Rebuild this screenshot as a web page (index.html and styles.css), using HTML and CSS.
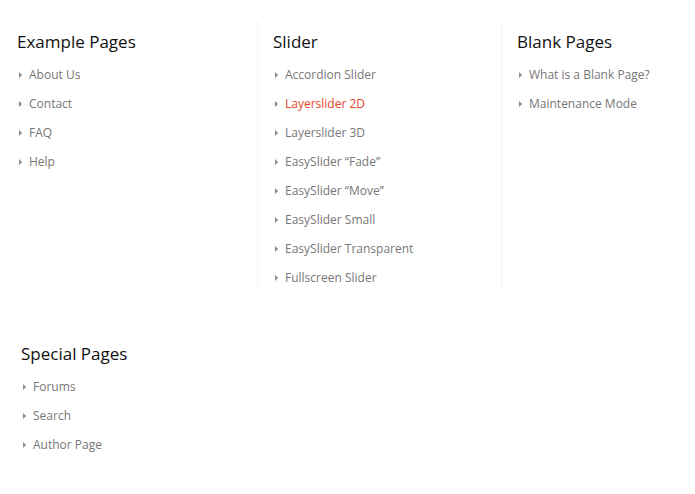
FILE: index.html
```html
<!DOCTYPE html>
<html lang="en">
<head>
    <meta charset="UTF-8">
    <meta name="viewport" content="width=device-width, initial-scale=1.0">
    <title>Sitemap</title>
    <link rel="stylesheet" href="styles.css">
</head>
<body>
    <div class="columns">
        <div class="col">
            <h3>Example Pages</h3>
            <ul class="links">
                <li><a href="#">About Us</a></li>
                <li><a href="#">Contact</a></li>
                <li><a href="#">FAQ</a></li>
                <li><a href="#">Help</a></li>
            </ul>
        </div>
        <div class="col">
            <h3>Slider</h3>
            <ul class="links">
                <li><a href="#">Accordion Slider</a></li>
                <li><a href="#" class="active">Layerslider 2D</a></li>
                <li><a href="#">Layerslider 3D</a></li>
                <li><a href="#">EasySlider &ldquo;Fade&rdquo;</a></li>
                <li><a href="#">EasySlider &ldquo;Move&rdquo;</a></li>
                <li><a href="#">EasySlider Small</a></li>
                <li><a href="#">EasySlider Transparent</a></li>
                <li><a href="#">Fullscreen Slider</a></li>
            </ul>
        </div>
        <div class="col">
            <h3>Blank Pages</h3>
            <ul class="links">
                <li><a href="#">What is a Blank Page?</a></li>
                <li><a href="#">Maintenance Mode</a></li>
            </ul>
        </div>
    </div>
    <div class="special">
        <h3>Special Pages</h3>
        <ul class="links">
            <li><a href="#">Forums</a></li>
            <li><a href="#">Search</a></li>
            <li><a href="#">Author Page</a></li>
        </ul>
    </div>
</body>
</html>
```

FILE: styles.css
```css
body {
    font-family: "Open Sans", Arial, sans-serif;
    background-color: #fff;
    margin: 0;
    padding: 0;
}
.columns {
    display: flex;
    margin-top: 22px;
}
.col {
    flex: 0 0 244px;
    padding: 8px 0 0 15px;
    box-sizing: border-box;
}
.col:first-child {
    flex-basis: 257px;
    padding-left: 17px;
}
.col:last-child {
    flex: 1 1 auto;
    min-width: 0;
}
.col + .col {
    border-left: 1px dotted #e8e8e8;
}
h3 {
    font-size: 17px;
    font-weight: 500;
    color: #111;
    line-height: 24px;
    margin: 0 0 6px;
}
.links {
    list-style: none;
    margin: 0;
    padding: 0;
}
.links li {
    display: block;
    height: 29px;
    line-height: 29px;
    font-size: 12px;
}
.links a {
    color: #777;
    text-decoration: none;
}
.links a::before {
    content: "";
    display: inline-block;
    vertical-align: 1px;
    border-left: 3px solid #888;
    border-top: 3px solid transparent;
    border-bottom: 3px solid transparent;
    margin: 0 7px 0 2px;
}
.links a.active {
    color: #e2471f;
}
.special {
    padding: 50px 0 0 21px;
}
```
